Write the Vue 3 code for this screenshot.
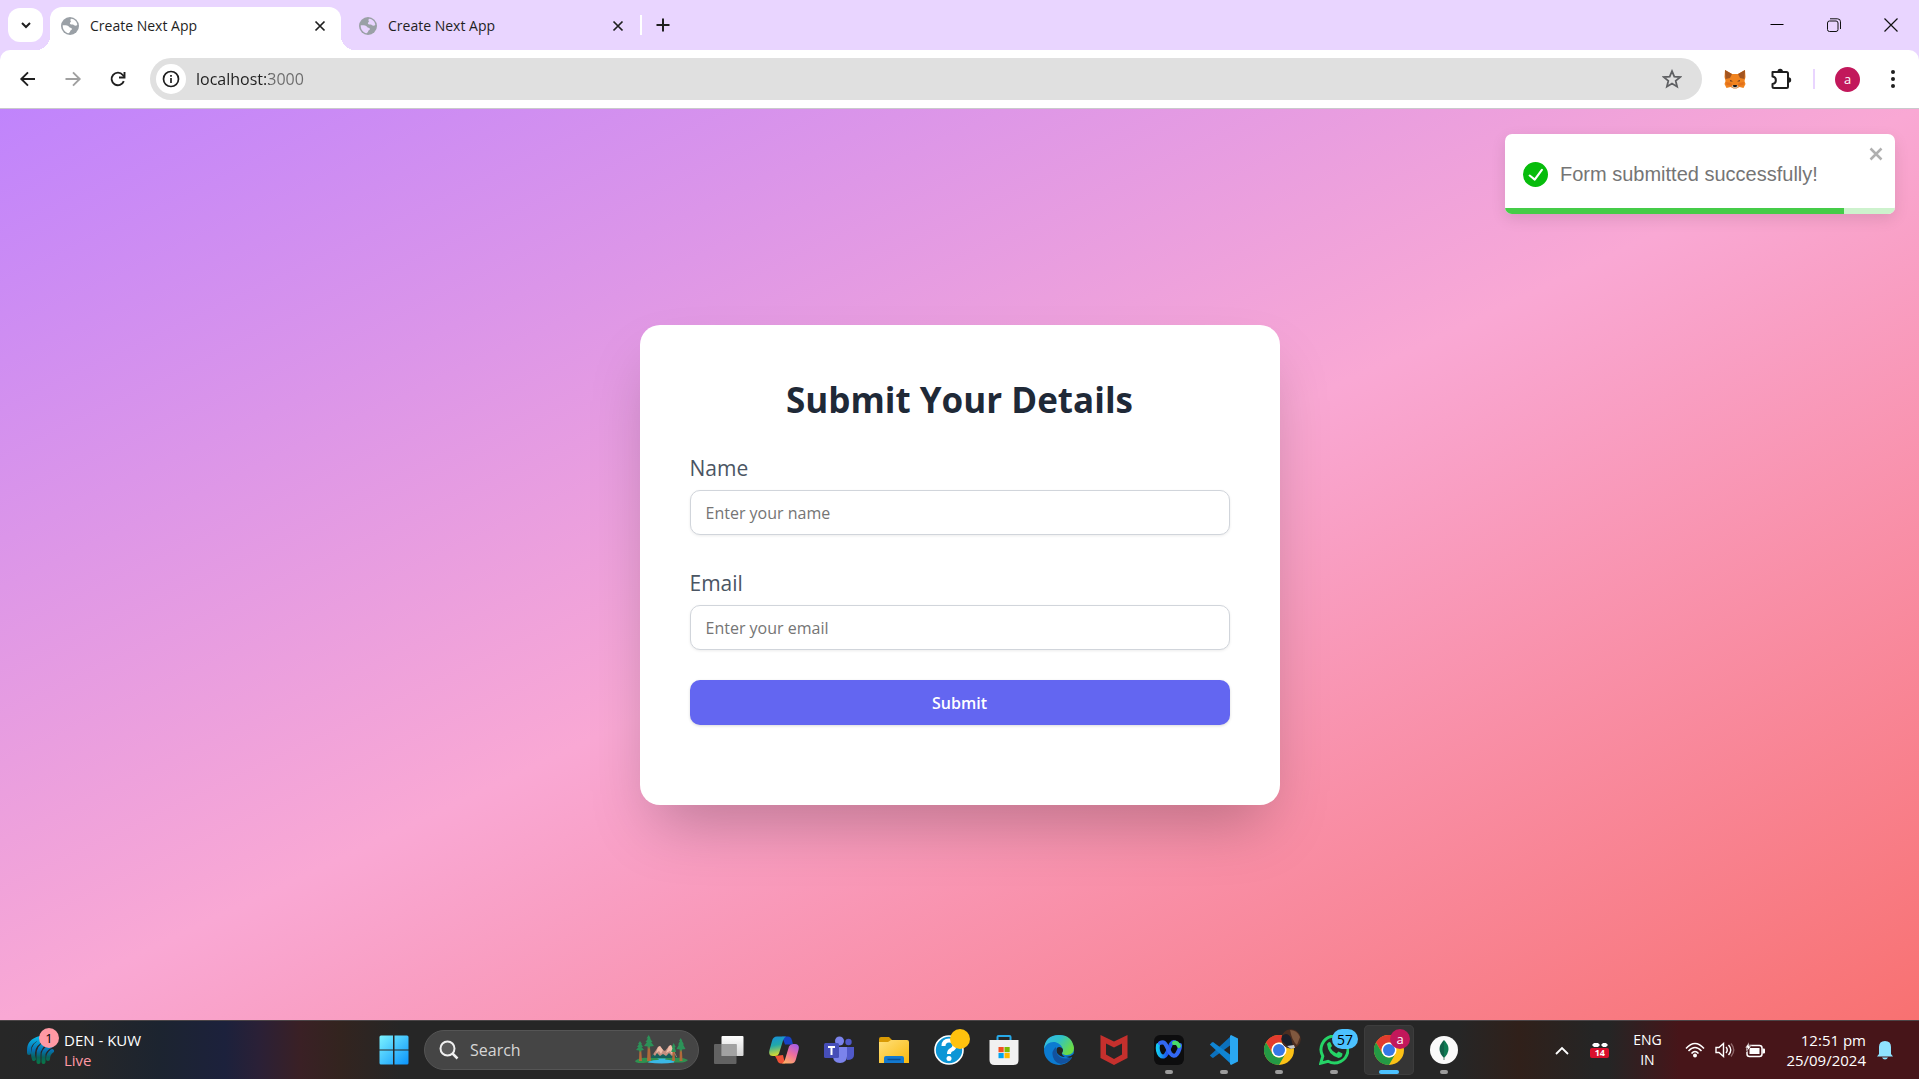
<script setup>
import { ref } from 'vue'

const tabs = [
  { id: 1, title: 'Create Next App', active: true },
  { id: 2, title: 'Create Next App', active: false },
]
const address = ref('localhost:3000')
const name = ref('')
const email = ref('')
const progress = ref(87)
</script>

<template>
  <div class="screen">
    <header class="browser">
      <div class="tabstrip">
        <button class="tab-search" aria-label="Search tabs">
          <svg width="12" height="12" viewBox="0 0 12 12"><path d="M2 4l4 4 4-4" fill="none" stroke="#1f1f1f" stroke-width="2" /></svg>
        </button>
        <div class="tabs">
          <div v-for="tab in tabs" :key="tab.id" class="tab" :class="{ active: tab.active }">
            <svg class="favicon" width="18" height="18" viewBox="0 0 18 18">
              <circle cx="9" cy="9" r="9" fill="#9aa0a6" />
              <path d="M10 1.800C13.500 2 16 4.600 16.300 8c-1 .8-2.300.8-3.300.2-.6-.8-1.600-.8-2.600-.8-1.400-.2-1.900-1.200-1.200-2 .8-.6 1-1.400.2-2 0-.8.200-1.200.6-1.600zM1.700 8.300c2.300-.2 5.300 0 6.300 1.400.6 1.300 2.600.9 3 2 .2 1-1.600 1.300-1.800 2.400 0 .9-.8 1.600-1.600 2.200C4 15.600 1.600 12.500 1.700 8.300z" :fill="tab.active ? '#fff' : '#e9d5ff'" />
            </svg>
            <span class="tab-title">{{ tab.title }}</span>
            <button class="bare tab-close" aria-label="Close tab">
              <svg width="12" height="12" viewBox="0 0 12 12"><path d="M1.500 1.500l9 9M10.500 1.500l-9 9" stroke="#1f1f1f" stroke-width="1.700" /></svg>
            </button>
          </div>
        </div>
        <span class="tab-divider"></span>
        <button class="bare new-tab" aria-label="New tab">
          <svg width="14" height="14" viewBox="0 0 14 14"><path d="M7 .5v13M.5 7h13" stroke="#1f1f1f" stroke-width="2" /></svg>
        </button>
        <div class="window-controls">
          <button class="bare" aria-label="Minimize">
            <svg width="14" height="14" viewBox="0 0 14 14"><path d="M.5 6.500h13" stroke="#000" /></svg>
          </button>
          <button class="bare" aria-label="Restore">
            <svg width="14" height="14" viewBox="0 0 14 14" fill="none" stroke="#111"><rect x=".5" y="3" width="10.500" height="10.500" rx="2" /><path d="M3 .8h7.500a3 3 0 0 1 3 3V11" /></svg>
          </button>
          <button class="bare" aria-label="Close">
            <svg width="14" height="14" viewBox="0 0 14 14"><path d="M.5.5l13 13M13.500.5l-13 13" stroke="#111" stroke-width="1.200" /></svg>
          </button>
        </div>
      </div>

      <div class="toolbar">
        <div class="nav">
          <button class="bare" aria-label="Back">
            <svg width="18" height="18" viewBox="0 0 18 18" fill="none" stroke="#1f1f1f" stroke-width="1.900"><path d="M16 9H2.500M9 2.300L2.300 9l6.700 6.700" /></svg>
          </button>
          <button class="bare" aria-label="Forward">
            <svg width="18" height="18" viewBox="0 0 18 18" fill="none" stroke="#a0a0a0" stroke-width="1.900"><path d="M1.500 9h14M9 2.300l6.700 6.700L9 15.700" /></svg>
          </button>
          <button class="bare" aria-label="Reload">
            <svg width="18" height="18" viewBox="0 0 18 18" fill="none" stroke="#1f1f1f" stroke-width="1.900"><path d="M14.800 11.200A6.300 6.300 0 1 1 13.800 5L15 6.500" /><path d="M15.500 2v5.500H10" /></svg>
          </button>
        </div>
        <div class="omnibox">
          <button class="bare site-info" aria-label="View site information">
            <svg width="18" height="18" viewBox="0 0 18 18"><circle cx="9" cy="9" r="7.500" fill="none" stroke="#1f1f1f" stroke-width="1.700" /><path d="M9 8v5M9 5v1.800" stroke="#1f1f1f" stroke-width="1.700" /></svg>
          </button>
          <input v-model="address" class="address" aria-label="Address" spellcheck="false" />
          <button class="bare star" aria-label="Bookmark this tab">
            <svg width="20" height="20" viewBox="0 0 20 20"><path d="M10 2.200l2.300 5.400 5.900.5-4.500 3.800 1.400 5.800L10 14.600l-5.100 3.100 1.400-5.800L1.800 8.100l5.900-.5z" fill="none" stroke="#5f6063" stroke-width="1.800" /></svg>
          </button>
        </div>
        <div class="extensions">
          <button class="bare" aria-label="Wallet">
            <svg width="22" height="20" viewBox="0 0 22 20">
              <path d="M1 1l7 4h6l7-4 .5 7-1 4 1 3-2 4-4-1-3 1.500h-3L6.500 18l-4 1-2-4 1-3-1-4z" fill="#f0831f" />
              <path d="M1 1l7 4-2 4-4.500 1zM21 1l-7 4 2 4 4.500 1z" fill="#a3541f" />
              <path d="M2 13l5 1 2 3-6.500-1zM20 13l-5 1-2 3 6.500-1z" fill="#e2701b" />
              <path d="M6 11l3 1.200-2.500.4zM16 11l-3 1.200 2.500.4z" fill="#4a2a25" />
              <path d="M7.500 17.500L9 16h4l1.500 1.500-2.500 2h-2z" fill="#c8b8ad" /><path d="M9 16h4l-.5 2h-3z" fill="#161616" />
            </svg>
          </button>
          <button class="bare" aria-label="Extensions">
            <svg width="22" height="22" viewBox="0 0 22 22"><path d="M2.500 4h14q1.500 0 1.500 1.500v13q0 1.500-1.500 1.500H4q-1.500 0-1.500-1.500V16c4.500-.5 4.500-7 0-7.500z" fill="none" stroke="#1f1f1f" stroke-width="2" stroke-linejoin="round" /><path d="M7.500 3.500a2.700 2.700 0 0 1 5.400 0zM18.500 9.300a2.700 2.700 0 0 1 0 5.400z" fill="#1f1f1f" /></svg>
          </button>
          <span class="tool-divider"></span>
          <button class="bare profile" aria-label="Profile">a</button>
          <button class="bare" aria-label="Menu">
            <svg width="4" height="18" viewBox="0 0 4 18" fill="#1f1f1f"><circle cx="2" cy="2" r="2" /><circle cx="2" cy="9" r="2" /><circle cx="2" cy="16" r="2" /></svg>
          </button>
        </div>
      </div>
    </header>

    <main class="page">
      <section class="card">
        <h1>Submit Your Details</h1>
        <form @submit.prevent>
          <div class="field">
            <label for="name">Name</label>
            <input id="name" v-model="name" type="text" placeholder="Enter your name" />
          </div>
          <div class="field">
            <label for="email">Email</label>
            <input id="email" v-model="email" type="email" placeholder="Enter your email" />
          </div>
          <button class="submit" type="submit">Submit</button>
        </form>
      </section>

      <div class="toast" role="alert">
        <svg width="25" height="25" viewBox="0 0 24 24"><path fill="#07bc0c" d="M12 0a12 12 0 1 0 12 12A12.014 12.014 0 0 0 12 0zm6.927 8.200l-6.845 9.289a1.011 1.011 0 0 1-1.430.188l-4.888-3.908a1 1 0 1 1 1.250-1.562l4.076 3.261 6.227-8.451a1 1 0 1 1 1.610 1.183z" /></svg>
        <span>Form submitted successfully!</span>
        <button class="bare toast-close" aria-label="Close notification">
          <svg width="14" height="14" viewBox="0 0 14 14"><path d="M1.500 1.500l11 11M12.500 1.500l-11 11" stroke="#b0b0b0" stroke-width="2.500" /></svg>
        </button>
        <div class="toast-track"><div class="toast-bar" :style="{ width: progress + '%' }"></div></div>
      </div>
    </main>

    <footer class="taskbar">
      <div class="widget-area">
        <button class="bare widget">
          <span class="widget-icon">
            <svg width="28" height="30" viewBox="0 0 28 30">
              <defs><linearGradient id="ball" gradientUnits="userSpaceOnUse" x1="0" y1="2" x2="0" y2="29"><stop offset="0" stop-color="#08b8e8" /><stop offset=".5" stop-color="#0670b0" /><stop offset=".75" stop-color="#08635c" /><stop offset="1" stop-color="#087a45" /></linearGradient></defs>
              <g fill="none" stroke="url(#ball)" stroke-width="4" stroke-linecap="round"><path d="M14 3Q3 6 3 15v3" /><path d="M18 4Q7 9 7 18q0 4 1 6" /><path d="M22 6Q12 12 12.500 20v7" /><path d="M25 11q-8 4-7.500 10v6" /><path d="M26 16q-4 3-4 8" /></g>
            </svg>
            <span class="badge news">1</span>
          </span>
          <span class="widget-text"><span>DEN - KUW</span><span class="live">Live</span></span>
        </button>
      </div>

      <div class="apps">
        <button class="bare app" aria-label="Start">
          <svg width="30" height="30" viewBox="0 0 30 30">
            <defs><linearGradient id="win" x2="1" y2="1"><stop offset="0" stop-color="#7cf3ff" /><stop offset="1" stop-color="#0a93fa" /></linearGradient></defs>
            <path fill="url(#win)" d="M2 .5h12v14H.5V2Q.5.5 2 .5zM15.500.5H28Q29.500.5 29.500 2v12.500h-14zM.5 15.500H14v14H2Q.5 29.500.5 28zM15.500 15.500h14V28q0 1.500-1.500 1.500H15.500z" />
          </svg>
        </button>
        <label class="search">
          <svg width="20" height="20" viewBox="0 0 20 20" fill="none" stroke="#f0f0f0" stroke-width="2"><circle cx="8.500" cy="8.500" r="7" fill="#5a5a5a" /><path d="M13.500 13.500l5 5" stroke-width="2.500" /></svg>
          <input type="text" placeholder="Search" aria-label="Search" />
          <svg width="54" height="30" viewBox="0 0 54 30">
            <path d="M17 21l6-9 2-1 3 4 2 1 4-5 2-1 6 12z" fill="#c58f80" /><path d="M23 12l2-1 3 4-2 4-2-3-3 2zM34 11l2-1 2 4-1 5-2-3-4 2z" fill="#f0bda9" />
            <path d="M15 24l3-5 2 2 2-3 3 3 3-2 3 2 3-3 3 3 3-2 2 5z" fill="#17605c" />
            <path d="M0 26q5-4 13-3h26q9-1 14 2-2 3-12 2.500H12Q1 29 0 26z" fill="#2f9150" />
            <path d="M22 23.500h9q-3 1 3 1.500 7 1 5 2.500-12 2-26 0 1-2 9-2.500 4-.5 0-1.500z" fill="#3bb8e6" />
            <g fill="#b06a3a"><path d="M4.500 12h1.500l1 14H4zM13 6h1.500l1.500 20h-4zM38 14h1.500l.5 12h-3zM45 8h1.500l1 18h-3z" /></g>
            <g fill="#2c9258"><path d="M5 6l2 3H6.300L8 12H6.500L9 15l-3 .5-1 2-1-2-3-.5 2.500-3H2L4 9H3zM13.700 0l2 3.500H15L17.500 7H16l3 4-4 .5-1 3-1-3-4-.5 3-4h-1.500L13 3.500h-1.500zM38.700 8l2 4-1 .5 1.500 4.500h-5l1.500-4.500-1-.5zM45.700 3l1.700 3H47l2 3.500h-1L50.500 14l-3.500.5-1 2.500-1-2.500-3.500-.5L44 9.500h-1L45 6h-1z" /></g>
          </svg>
        </label>
        <button class="bare app" aria-label="Task view">
          <svg width="30" height="30" viewBox="0 0 30 30">
            <defs><linearGradient id="tv" x2="0" y2="1"><stop offset="0" stop-color="#fff" /><stop offset="1" stop-color="#d5d5d5" /></linearGradient></defs>
            <rect x="7.500" y="1" width="22" height="20" rx="1" fill="url(#tv)" /><rect x="0" y="9" width="22.500" height="20" rx="1" fill="#6d6d6d" opacity=".85" /><rect x="7.500" y="9" width="15" height="12" fill="#a2a2a2" />
          </svg>
        </button>
        <button class="bare app" aria-label="Copilot">
          <svg width="30" height="28" viewBox="0 0 30 28">
            <defs>
              <linearGradient id="cpa" x2=".2" y2="1"><stop offset="0" stop-color="#168ddc" /><stop offset=".5" stop-color="#22a9a8" /><stop offset="1" stop-color="#d6d931" /></linearGradient>
              <linearGradient id="cpb" x1=".8" x2=".3" y2="1"><stop offset="0" stop-color="#a45ce8" /><stop offset=".5" stop-color="#ee6f9d" /><stop offset="1" stop-color="#ffad68" /></linearGradient>
            </defs>
            <path d="M13 .5h6q3 0 4 4l1 4h-8z" fill="#1743c5" /><path d="M6 20l8-1 2 8.500h-4q-3 0-4-4z" fill="#f05237" />
            <path d="M8 .5h9q-2 1-3 4l-4 13q-1 2.500-4 2.500H4q-5 0-3.500-6L3 5Q4 .5 8 .5z" fill="url(#cpa)" />
            <path d="M22 27.500h-9q2-1 3-4l4-13Q21 8 24 8h2q5 0 3.500 6L27 23q-1 4.500-5 4.500z" fill="url(#cpb)" />
          </svg>
        </button>
        <button class="bare app" aria-label="Teams">
          <svg width="32" height="28" viewBox="0 0 32 28">
            <circle cx="25.500" cy="6" r="3.200" fill="#5059c9" /><path d="M22 11h9v8q0 5-7 5z" fill="#5059c9" />
            <circle cx="16.500" cy="5" r="4.500" fill="#7b83eb" /><path d="M10 11h14v9q0 7-7 7t-7-7z" fill="#7b83eb" /><rect x="1" y="7" width="15" height="15" rx="1.500" fill="#464eb8" />
            <path d="M5 11h7M8.500 11v8" stroke="#fff" stroke-width="2" />
          </svg>
        </button>
        <button class="bare app" aria-label="File Explorer">
          <svg width="30" height="28" viewBox="0 0 30 28">
            <defs><linearGradient id="fold" x2="1" y2="1"><stop offset="0" stop-color="#ffe07a" /><stop offset="1" stop-color="#f9b80c" /></linearGradient></defs>
            <path d="M0 3q0-2 2-2h8l3 3v4H0z" fill="#d99a04" /><path d="M0 6h9l3-2h16q2 0 2 2v21H0z" fill="url(#fold)" />
            <path d="M5 27v-5q0-2 2-2h16q2 0 2 2v5z" fill="#1379cf" /><path d="M8.500 23.500h13" stroke="#0b4f91" stroke-width="1.500" />
          </svg>
        </button>
        <button class="bare app" aria-label="Help">
          <svg width="30" height="30" viewBox="0 0 30 30"><circle cx="15" cy="15" r="14" fill="#0c96d6" stroke="#fff" stroke-width="1.600" /><path d="M9.500 11q0-5.500 5.500-5.500t5.500 5q0 3-3.500 4.500-2 1-2 4" fill="none" stroke="#fff" stroke-width="4" /><circle cx="15" cy="23.500" r="2.500" fill="#fff" /></svg>
          <span class="badge dot"></span>
        </button>
        <button class="bare app" aria-label="Microsoft Store">
          <svg width="30" height="30" viewBox="0 0 30 30"><path d="M8.500 7V2q0-1 1-1h11q1 0 1 1v5" fill="none" stroke="#27a9e8" stroke-width="2" /><path d="M.5 5h29v20q0 5-5 5h-19q-5 0-5-5z" fill="#f1f1f1" /><path fill="#f25022" d="M9.500 12h5.200v5.200H9.500z" /><path fill="#7fba00" d="M15.500 12h5.200v5.200h-5.200z" /><path fill="#00a4ef" d="M9.500 18h5.200v5.200H9.500z" /><path fill="#ffb900" d="M15.500 18h5.200v5.200h-5.200z" /></svg>
        </button>
        <button class="bare app" aria-label="Edge">
          <svg width="30" height="30" viewBox="0 0 30 30">
            <defs><linearGradient id="eda" x2="1" y2=".5"><stop offset="0" stop-color="#35b9ed" /><stop offset=".5" stop-color="#2fc2c8" /><stop offset="1" stop-color="#6bdc45" /></linearGradient></defs>
            <circle cx="15" cy="15" r="15" fill="#0c7bd1" /><path d="M0 14Q1 0 15 0q13 0 15 13 0 7-7 7-4 0-5-2 1-1 1-3-1-6-8-8Q3 6 0 14z" fill="url(#eda)" />
            <path d="M12 12q-5 4-3 10 2 6 8 7 8-1 11-7-6 3-12 0-5-4-4-10z" fill="#12529f" /><path d="M13 13q2-2 5 0 2 2 0 5-1 2 3 4-5 0-8-4-1-3 0-5zM21 21.500q5 1 8.500-2.500l2 0-2.500 6q0-2-1-3-3 1.500-7-.5z" fill="#242525" />
          </svg>
        </button>
        <button class="bare app" aria-label="McAfee">
          <svg width="28" height="30" viewBox="0 0 28 30"><path d="M.5 0L14 6.500 27.500 0v23L14 30 .5 23z" fill="#c5302d" /><path d="M6 8.500l8 4 8-4v11l-8 4.500-8-4.500z" fill="#262626" /></svg>
        </button>
        <button class="bare app open" aria-label="Webex">
          <svg width="30" height="30" viewBox="0 0 30 30">
            <defs><linearGradient id="wx" x2="1"><stop offset="0" stop-color="#12c7f3" /><stop offset=".5" stop-color="#1d55f0" /><stop offset="1" stop-color="#2e62f5" /></linearGradient></defs>
            <rect width="30" height="30" rx="6" fill="#0d0d0e" />
            <g fill="none" stroke-width="4" stroke-linecap="round"><path d="M4 10q-1 6 2 10 4 4 7-2l4-9q2-3 5-1" stroke="url(#wx)" /><path d="M6 8q4-2 6 2l4 8q4 5 7 1 3-4 3-9" stroke="#3268f4" /><path d="M20 8q3-1 5 3" stroke="#48dc6a" /></g>
          </svg>
        </button>
        <button class="bare app open" aria-label="Visual Studio Code">
          <svg width="30" height="30" viewBox="0 0 30 30"><path d="M22 1L.8 20.500 3 22.500 4 23 23 9z" fill="#0c71bd" /><path d="M22 29L.8 9.500 3 7.500 4 7 23 21z" fill="#1085d3" /><path d="M22 0l7 3.500v23L22 30l-1-1V1z" fill="#2aa8f2" /></svg>
        </button>
        <button class="bare app open" aria-label="Chrome, personal profile">
          <svg width="30" height="30" viewBox="0 0 30 30"><circle cx="15" cy="15" r="15" fill="#fbc116" /><path d="M2 7.500A15 15 0 0 1 28 7.500H15a7.500 7.500 0 0 0-6.500 11.200z" fill="#e33b2e" /><path d="M2 7.500L8.500 18.700A7.500 7.500 0 0 0 21.500 18.700L15 30A15 15 0 0 1 2 7.500z" fill="#249a45" /><circle cx="15" cy="15" r="7.500" fill="#fff" /><circle cx="15" cy="15" r="6" fill="#3578e5" /></svg>
          <svg class="badge photo" width="20" height="20" viewBox="0 0 20 20"><circle cx="10" cy="10" r="10" fill="#4c2d20" /><path d="M9 1q7 0 10 7l-3 8q-5-4-7-15z" fill="#80583f" /><path d="M1 7q5-5 9 2l2 8-5 1-6-6z" fill="#1c1f29" /><path d="M6 17l7-1 1 3-4 1z" fill="#c7c7ca" /></svg>
        </button>
        <button class="bare app open" aria-label="WhatsApp">
          <svg width="30" height="30" viewBox="0 0 30 30"><path d="M1.800 28.200l2-7A13.500 13.500 0 1 1 9 26.300z" fill="#262626" stroke="#25d366" stroke-width="3" /><path d="M8 9q2-3 3.500-1.500l1.500 3.500-1.500 2q2 4 6 5.500l2-2 4 2q0 4-4 4.500Q9 20 8 9z" fill="#25d366" /></svg>
          <span class="badge count">57</span>
        </button>
        <button class="bare app open current" aria-label="Chrome">
          <svg width="30" height="30" viewBox="0 0 30 30"><circle cx="15" cy="15" r="15" fill="#fbc116" /><path d="M2 7.500A15 15 0 0 1 28 7.500H15a7.500 7.500 0 0 0-6.500 11.200z" fill="#e33b2e" /><path d="M2 7.500L8.500 18.700A7.500 7.500 0 0 0 21.500 18.700L15 30A15 15 0 0 1 2 7.500z" fill="#249a45" /><circle cx="15" cy="15" r="7.500" fill="#fff" /><circle cx="15" cy="15" r="6" fill="#3578e5" /></svg>
          <span class="badge initial">a</span>
        </button>
        <button class="bare app open" aria-label="MongoDB Compass">
          <svg width="28" height="28" viewBox="0 0 28 28"><circle cx="14" cy="14" r="14" fill="#fafafa" /><path d="M14 4q-9 9 0 18z" fill="#116149" /><path d="M14 4q9 9 0 18z" fill="#0f7a52" /><path d="M14 21v3" stroke="#7a9c8c" stroke-width="1.200" /></svg>
        </button>
      </div>

      <div class="tray">
        <button class="bare" aria-label="Show hidden icons">
          <svg width="14" height="9" viewBox="0 0 14 9"><path d="M1 8l6-6 6 6" fill="none" stroke="#fff" stroke-width="1.800" /></svg>
        </button>
        <button class="bare meter" aria-label="Network meter">
          <svg width="18" height="6" viewBox="0 0 18 6"><path d="M1 3l2-2h4l2 2-2 2H3zM10 3l2-2h3l2 2-2 2h-3z" fill="#fff" /></svg>
          <span>14</span>
        </button>
        <button class="bare language">ENG<br />IN</button>
        <button class="bare status" aria-label="Network, volume and battery">
          <svg width="20" height="16" viewBox="0 0 20 16"><g fill="none" stroke="#fff" stroke-width="1.500"><path d="M1 6.500q9-10 18 0M3.500 9q6.500-7 13 0M6.500 11.500q3.500-4 7 0" /></g><circle cx="10" cy="13.500" r="2" fill="#fff" /></svg>
          <svg width="20" height="16" viewBox="0 0 20 16" fill="none" stroke="#fff" stroke-width="1.400"><path d="M1 5.500h3L8.500 1.500v13L4 10.500H1z" /><path d="M11 5q2.500 3 0 6M13.500 3q4.500 5 0 10" /><path d="M16 1.500q5.500 6.500 0 13" stroke="#8d6668" /></svg>
          <svg width="20" height="16" viewBox="0 0 20 16"><rect x="2" y="3.500" width="15" height="11" rx="2.500" fill="none" stroke="#fff" stroke-width="1.500" /><path d="M4.500 6h10v6h-10zM17.500 6.500H19q1 0 1 1v3q0 1-1 1h-1.500z" fill="#fff" /><path d="M4 0L0 6h2.500L1.500 10 6.500 4H4z" fill="#fff" stroke="#471519" stroke-width=".6" /></svg>
        </button>
        <button class="bare clock">
          <time>12:51 pm<br />25/09/2024</time>
          <svg width="16" height="20" viewBox="0 0 16 20" fill="#8fe3ff"><path d="M2 14V7q0-6 6-6t6 6v7l2 2.500H0zM5 17.500h6q-1 2-3 2t-3-2z" /></svg>
        </button>
      </div>
    </footer>
  </div>
</template>

<style>
body {
  margin: 0;
}
</style>

<style scoped>
* {
  box-sizing: border-box;
}
.screen {
  display: flex;
  flex-direction: column;
  min-height: 100vh;
  font-family: "Open Sans", "Noto Sans", sans-serif;
  color: #1f1f1f;
}
.bare {
  display: flex;
  align-items: center;
  justify-content: center;
  padding: 0;
  border: 0;
  background: none;
  font-family: inherit;
}
svg {
  display: block;
  flex: none;
}

/* Browser chrome */
.browser {
  background: #e9d5ff;
}
.tabstrip {
  display: flex;
  align-items: center;
  height: 50px;
  padding-left: 8px;
}
.tab-search {
  display: flex;
  align-items: center;
  justify-content: center;
  width: 35px;
  height: 34px;
  padding: 0;
  border: 0;
  border-radius: 12px;
  background: #fff;
}
.tabs {
  display: flex;
  align-self: flex-end;
  gap: 7px;
  margin-left: 7px;
}
.tab {
  position: relative;
  display: flex;
  align-items: center;
  width: 291px;
  height: 43px;
  padding: 0 14px 6px 11px;
}
.tab.active {
  border-radius: 12px 12px 0 0;
  background: #fff;
}
.tab.active::before,
.tab.active::after {
  content: "";
  position: absolute;
  bottom: 0;
  width: 14px;
  height: 14px;
}
.tab.active::before {
  right: 100%;
  background: radial-gradient(circle at 0 0, transparent 14px, #fff 14px);
}
.tab.active::after {
  left: 100%;
  background: radial-gradient(circle at 100% 0, transparent 14px, #fff 14px);
}
.tab-title {
  flex: 1;
  margin-left: 11px;
  font-size: 14px;
  line-height: 20px;
}
.tab-close {
  width: 14px;
  height: 14px;
}
.tab-divider {
  width: 2px;
  height: 20px;
  margin-left: 1px;
  background: #fff;
}
.new-tab {
  width: 42px;
  height: 34px;
}
.window-controls {
  display: flex;
  margin-left: auto;
}
.window-controls button {
  width: 57px;
  height: 50px;
}
.toolbar {
  display: flex;
  align-items: center;
  height: 59px;
  padding: 0 24px 0 5px;
  border-bottom: 1px solid #c9c9cc;
  border-radius: 10px 10px 0 0;
  background: #fff;
}
.nav {
  display: flex;
  margin-right: 10px;
}
.nav button {
  width: 45px;
  height: 45px;
}
.omnibox {
  display: flex;
  flex: 1;
  align-items: center;
  height: 42px;
  padding: 0 20px 0 6px;
  border-radius: 21px;
  background: #e0e0e0;
}
.site-info {
  width: 30px;
  height: 30px;
  border-radius: 50%;
  background: #fff;
}
.address {
  flex: 1;
  margin-left: 10px;
  padding: 0;
  border: 0;
  outline: 0;
  background: linear-gradient(90deg, #1f1f1f 74px, #6b6b6b 74px) text;
  color: #1f1f1f;
  -webkit-text-fill-color: transparent;
  font: 16px/24px "Open Sans", "Noto Sans", sans-serif;
}
.extensions {
  display: flex;
  align-items: center;
  margin-left: 22px;
}
.extensions button:nth-child(2) {
  margin-left: 24px;
}
.tool-divider {
  width: 2px;
  height: 20px;
  margin: 0 20px 0 21px;
  background: #e9d5ff;
}
.profile {
  width: 25px;
  height: 25px;
  margin-right: 31px;
  border-radius: 50%;
  background: #c2185b;
  color: #fff;
  font-size: 13px;
}

/* Web page */
.page {
  position: relative;
  display: flex;
  flex: 1;
  align-items: center;
  justify-content: center;
  padding: 50px 20px;
  background: linear-gradient(to bottom right, #c084fc, #f9a8d4, #f87171);
}
.card {
  width: 100%;
  max-width: 640px;
  padding: 50px 50px 80px;
  border-radius: 20px;
  background: #fff;
  box-shadow: 0 31px 62px -15px rgba(0, 0, 0, 0.25);
}
h1 {
  margin: 0 0 25px;
  color: #1f2937;
  font-size: 35px;
  font-weight: 700;
  line-height: 50px;
  text-align: center;
}
form {
  display: flex;
  flex-direction: column;
  gap: 30px;
}
.field {
  display: flex;
  flex-direction: column;
  gap: 3px;
}
.field label {
  color: #4b5563;
  font-size: 21px;
  line-height: 37px;
}
.field input {
  width: 100%;
  height: 45px;
  padding: 2px 15px 0;
  border: 1px solid #d1d5db;
  border-radius: 10px;
  background: #fff;
  box-shadow: 0 1px 3px rgba(0, 0, 0, 0.08);
  color: #1f2937;
  font: 16px/24px "Open Sans", "Noto Sans", sans-serif;
}
.field input::placeholder {
  color: #757575;
}
.submit {
  height: 45px;
  padding: 2px 15px 0;
  border: 0;
  border-radius: 10px;
  background: #6366f1;
  box-shadow: 0 1px 3px rgba(0, 0, 0, 0.15);
  color: #fff;
  font: 600 16px/24px "Open Sans", "Noto Sans", sans-serif;
}
.toast {
  position: absolute;
  top: 25px;
  right: 24px;
  display: flex;
  align-items: center;
  gap: 12px;
  width: 390px;
  height: 80px;
  padding: 0 18px;
  overflow: hidden;
  border-radius: 7px;
  background: #fff;
  box-shadow: 0 5px 15px rgba(0, 0, 0, 0.1);
  color: #757575;
  font: 20px/30px "Liberation Sans", Arial, sans-serif;
}
.toast-close {
  position: absolute;
  top: 13px;
  right: 12px;
}
.toast-track {
  position: absolute;
  right: 0;
  bottom: 0;
  left: 0;
  height: 6px;
  background: #cdf2cd;
}
.toast-bar {
  height: 100%;
  background: #45cc48;
}

/* Taskbar */
.taskbar {
  display: flex;
  align-items: center;
  height: 59px;
  border-top: 1px solid #4b4547;
  background:
    linear-gradient(90deg, #272727 0, #262728 80px, #1c2430 160px, #1c213c 225px, #2b2036 260px, #3a2025 300px, #33241f 340px, #262626 400px) no-repeat 0 0 / 400px 100%,
    linear-gradient(90deg, #262626, #30201a 60px, #252525 135px, #252525 150px, #471519 220px) no-repeat 100% 0 / 460px 100%,
    #262626;
  color: #fff;
}
.taskbar button {
  color: #fff;
}
.widget-area {
  flex: none;
  width: 369px;
  padding-left: 26px;
}
.widget {
  gap: 10px;
}
.widget-icon {
  position: relative;
}
.widget-text {
  display: flex;
  flex-direction: column;
  font-size: 15px;
  line-height: 20px;
  text-align: left;
}
.live {
  color: #ff99a4;
}
.badge {
  position: absolute;
  display: flex;
  align-items: center;
  justify-content: center;
  height: 20px;
  border-radius: 10px;
}
.taskbar .news {
  top: -7px;
  left: 13px;
  width: 20px;
  background: #ff99a4;
  color: #000;
  font-size: 13px;
}
.apps {
  display: flex;
  align-items: center;
  gap: 5px;
}
.app {
  position: relative;
  width: 50px;
  height: 50px;
  border-radius: 5px;
}
.app.open::after {
  content: "";
  position: absolute;
  bottom: 1px;
  width: 8px;
  height: 4px;
  border-radius: 2px;
  background: #9c9c9c;
}
.app.current {
  background: #353535;
  box-shadow: inset 0 0 0 1px #3d3d3d;
}
.app.current::after {
  width: 20px;
  background: #4cc2ff;
}
.dot {
  top: 4px;
  right: 4px;
  width: 20px;
  background: #ffc20e;
}
.photo {
  top: 4px;
  right: 3px;
}
.count {
  top: 4px;
  right: 1px;
  width: 26px;
  background: #4cc2ff;
  color: #000;
  font-size: 14px;
}
.initial {
  top: 4px;
  right: 4px;
  width: 20px;
  background: #c2185b;
  color: #fff;
  font-size: 13px;
}
.search {
  display: flex;
  align-items: center;
  width: 275px;
  height: 40px;
  padding: 0 9px 0 14px;
  border: 1px solid #555;
  border-radius: 20px;
  background: #454545;
}
.search input {
  flex: 1;
  min-width: 0;
  margin-left: 11px;
  padding: 0;
  border: 0;
  outline: 0;
  background: none;
  color: #fff;
  font: 16px/24px "Open Sans", "Noto Sans", sans-serif;
}
.search input::placeholder {
  color: #d6d6d6;
  opacity: 1;
}
.tray {
  display: flex;
  align-items: center;
  gap: 21px;
  margin-left: auto;
  padding-right: 26px;
}
.meter {
  flex-direction: column;
}
.meter span {
  width: 19px;
  height: 10px;
  border-radius: 2px;
  background: #d8102c;
  font-size: 9px;
  font-weight: 700;
  line-height: 10px;
}
.language {
  width: 34px;
  font-size: 14px;
  line-height: 20px;
}
.status {
  gap: 10px;
}
.clock {
  gap: 11px;
  font-size: 15px;
  line-height: 20px;
  text-align: right;
}
</style>
